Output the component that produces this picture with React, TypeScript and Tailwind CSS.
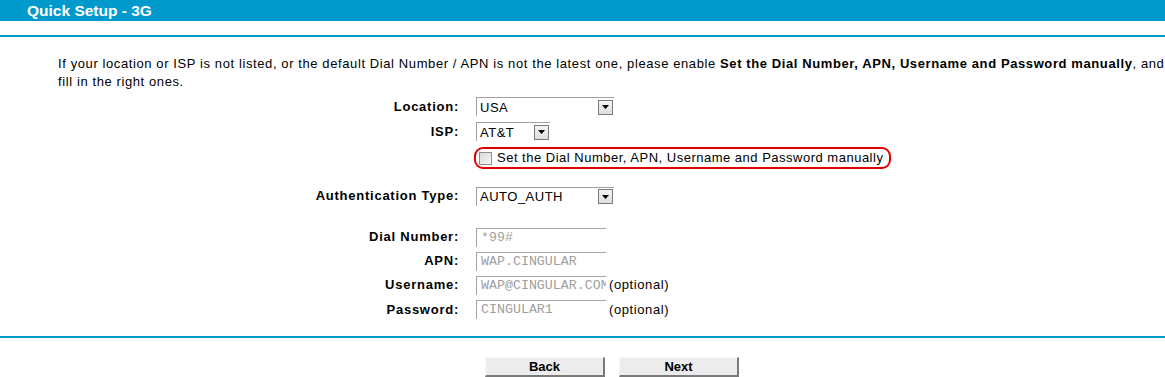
import React from "react";

const font = { fontFamily: '"Liberation Sans", Arial, sans-serif' };

function Select({ value, width }: { value: string; width: string }) {
  return (
    <div className={`flex h-[19px] ${width} items-center justify-between border-t border-l border-[#a0a0a0] bg-white`}>
      <span className="pl-[3px] text-[13px] leading-none tracking-[0.5px] text-black">{value}</span>
      <div className="mr-[1px] flex h-[15px] w-[15px] items-center justify-center border border-[#7a7a7a] bg-gradient-to-b from-[#f4f4f4] to-[#dedede]">
        <svg width="7" height="4" viewBox="0 0 7 4">
          <path d="M0 0h7L3.5 4z" fill="#000" />
        </svg>
      </div>
    </div>
  );
}

function TextBox({ value }: { value: string }) {
  return (
    <div
      className="flex h-[19px] w-[130px] items-center overflow-hidden whitespace-nowrap border-t border-l border-[#a5a5a5] bg-white pl-[4px] text-[13.3px] leading-none text-[#a0a0a0]"
      style={{ fontFamily: '"Liberation Mono", "Courier New", monospace' }}
    >
      {value}
    </div>
  );
}

function Row({
  label,
  h,
  children,
  className = "",
}: {
  label: string;
  h: string;
  children: React.ReactNode;
  className?: string;
}) {
  return (
    <div className={`flex items-center ${h} ${className}`}>
      <div className="w-[459px] text-right text-[13px] font-bold tracking-[0.75px] text-black">{label}</div>
      <div className="ml-[17px] flex items-center">{children}</div>
    </div>
  );
}

export default function App() {
  return (
    <div className="h-[377px] w-[1165px] overflow-hidden bg-white" style={font}>
      <div className="flex h-[21px] items-center bg-[#0099cc] pl-[27px]">
        <span className="text-[15.5px] font-bold leading-none text-white">Quick Setup - 3G</span>
      </div>
      <div className="mt-[14px] h-[2px] bg-[#0099cc]" />
      <p className="ml-[58px] mt-[18px] text-[13px] leading-[18px] tracking-[0.6px] text-black">
        If your location or ISP is not listed, or the default Dial Number / APN is not the latest one, please enable{" "}
        <b>Set the Dial Number, APN, Username and Password manually</b>, and fill in the right ones.
      </p>
      <div className="mt-[3px] flex flex-col">
        <Row label="Location:" h="h-[25px]">
          <Select value="USA" width="w-[138px]" />
        </Row>
        <Row label="ISP:" h="h-[25px]">
          <Select value="AT&T" width="w-[74px]" />
        </Row>
        <div className="flex h-[28px] items-center">
          <div className="ml-[474px] flex h-[22px] items-center rounded-[9px] border-2 border-[#e00000] pl-[3px] pr-[6px]">
            <div className="h-[13px] w-[13px] border border-[#8f8f8f] bg-gradient-to-br from-[#d8d8d8] to-[#f8f8f8]" />
            <span className="ml-[5px] text-[13px] tracking-[0.5px] text-black">
              Set the Dial Number, APN, Username and Password manually
            </span>
          </div>
        </div>
        <Row label="Authentication Type:" h="h-[24px]" className="mt-[12px]">
          <Select value="AUTO_AUTH" width="w-[138px]" />
        </Row>
        <Row label="Dial Number:" h="h-[24px]" className="mt-[17px]">
          <TextBox value="*99#" />
        </Row>
        <Row label="APN:" h="h-[24px]">
          <TextBox value="WAP.CINGULAR" />
        </Row>
        <Row label="Username:" h="h-[24px]">
          <TextBox value="WAP@CINGULAR.COM" />
          <span className="ml-[3px] text-[13px] tracking-[0.6px] text-black">(optional)</span>
        </Row>
        <Row label="Password:" h="h-[25px]">
          <TextBox value="CINGULAR1" />
          <span className="ml-[3px] text-[13px] tracking-[0.6px] text-black">(optional)</span>
        </Row>
      </div>
      <div className="mt-[14px] h-[2px] bg-[#0099cc]" />
      <div className="ml-[485px] mt-[19px] flex gap-[14px]">
        {["Back", "Next"].map((t) => (
          <button
            key={t}
            className="flex h-[20px] w-[120px] items-center justify-center border-t border-l border-b-2 border-r-2 border-t-[#f8f8f8] border-l-[#f8f8f8] border-b-[#7a7a7a] border-r-[#7a7a7a] bg-[#ececec] text-[13px] font-bold text-black"
            style={font}
          >
            {t}
          </button>
        ))}
      </div>
    </div>
  );
}
